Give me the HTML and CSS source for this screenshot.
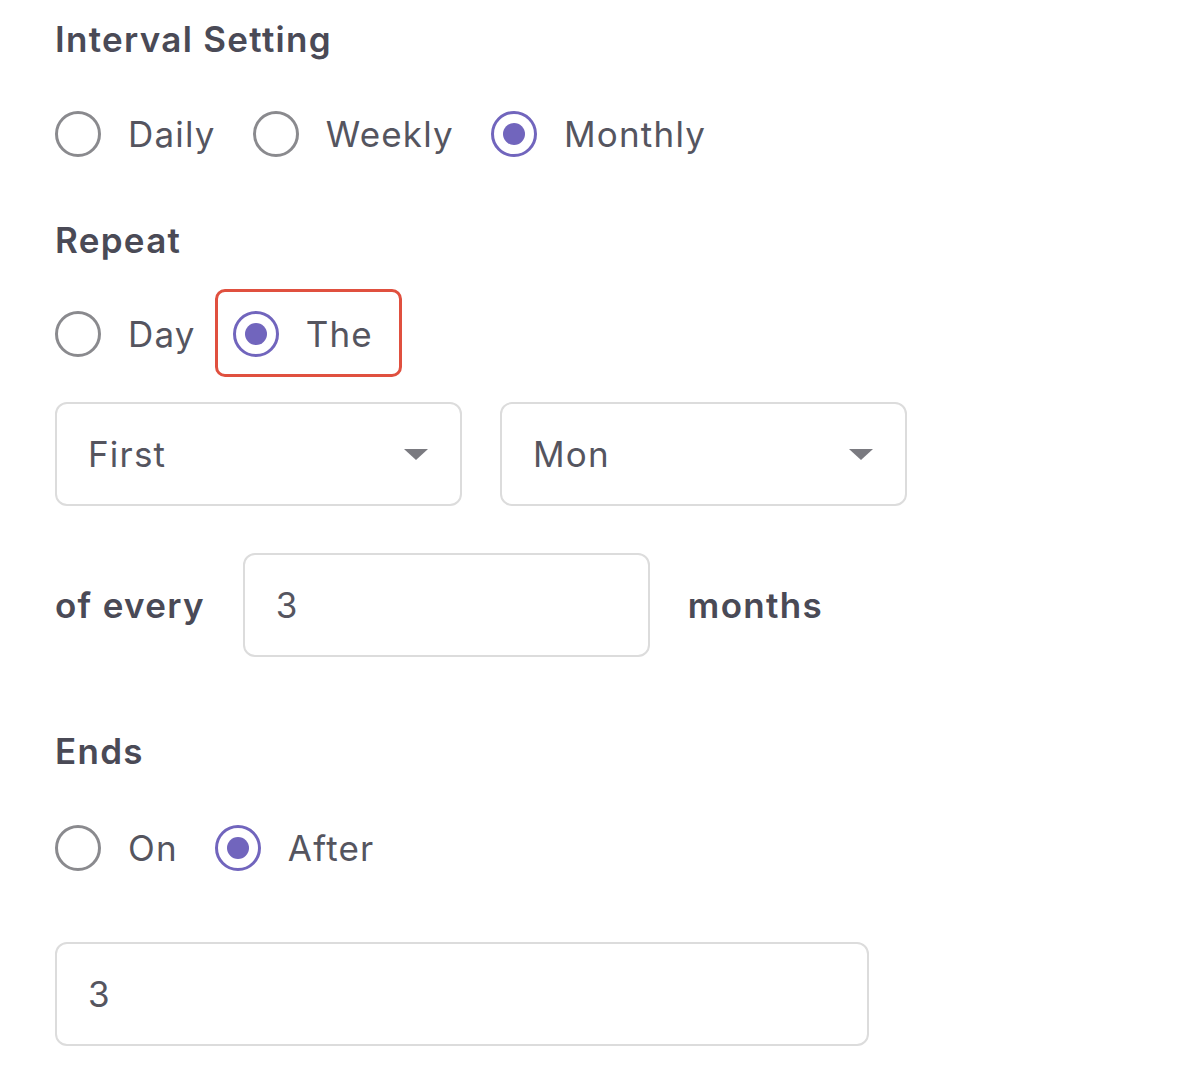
FILE: index.html
```html
<!DOCTYPE html>
<html>
<head>
<meta charset="utf-8">
<link rel="stylesheet" href="styles.css">
</head>
<body>
<div class="form">
  <div class="heading h-interval">Interval Setting</div>
  <div class="radio-row row-interval">
    <label class="opt"><span class="radio"></span><span class="opt-label">Daily</span></label>
    <label class="opt"><span class="radio"></span><span class="opt-label">Weekly</span></label>
    <label class="opt"><span class="radio checked"></span><span class="opt-label">Monthly</span></label>
  </div>

  <div class="heading h-repeat">Repeat</div>
  <div class="radio-row row-repeat">
    <label class="opt"><span class="radio"></span><span class="opt-label">Day</span></label>
    <label class="opt highlighted"><span class="radio checked"></span><span class="opt-label">The</span></label>
  </div>

  <div class="select-row">
    <div class="select"><span class="value">First</span><span class="caret"></span></div>
    <div class="select"><span class="value">Mon</span><span class="caret"></span></div>
  </div>

  <div class="every-row">
    <span class="inline-label">of every</span>
    <div class="input small"><span class="value">3</span></div>
    <span class="inline-label">months</span>
  </div>

  <div class="heading h-ends">Ends</div>
  <div class="radio-row row-ends">
    <label class="opt"><span class="radio"></span><span class="opt-label">On</span></label>
    <label class="opt"><span class="radio checked"></span><span class="opt-label">After</span></label>
  </div>

  <div class="input wide"><span class="value">3</span></div>
</div>
</body>
</html>
```

FILE: styles.css
```css
* { box-sizing: border-box; }
html, body { margin: 0; padding: 0; background: #ffffff; }
body {
  font-family: Inter, "Noto Sans", sans-serif;
  color: #555560;
}
.form {
  padding: 19px 0 0 55px;
  display: flex;
  flex-direction: column;
  align-items: flex-start;
}
.heading {
  font-size: 35px;
  letter-spacing: 1.3px;
  line-height: 40px;
  height: 40px;
  font-weight: 600;
  color: #4a4a56;
}
.radio-row {
  display: flex;
  align-items: center;
  gap: 37px;
  height: 50px;
}
.row-interval { margin-top: 50px; }
.h-repeat { margin-top: 61px; }
.row-repeat { margin-top: 49px; }
.h-ends { margin-top: 74px; }
.row-ends { margin-top: 52px; }

.opt {
  display: flex;
  align-items: center;
  gap: 27px;
  position: relative;
}
.opt-label {
  font-size: 35px;
  letter-spacing: 1.2px;
  line-height: 40px;
  color: #55555f;
}
.radio {
  width: 46px;
  height: 46px;
  border-radius: 50%;
  border: 3.5px solid #8a8a8e;
  display: flex;
  align-items: center;
  justify-content: center;
  flex: none;
}
.radio.checked { border-color: #7165bd; }
.radio.checked::after {
  content: "";
  width: 22px;
  height: 22px;
  border-radius: 50%;
  background: #7165bd;
}
.highlighted::before {
  content: "";
  position: absolute;
  left: -18px;
  top: -22px;
  right: -29px;
  bottom: -20px;
  border: 3px solid #e0503f;
  border-radius: 10px;
}

.select-row {
  margin-top: 43px;
  display: flex;
  gap: 38px;
}
.select, .input {
  height: 104px;
  border: 2px solid #dcdcdc;
  border-radius: 12px;
  display: flex;
  align-items: center;
  padding-left: 31px;
  background: #fff;
}
.select {
  width: 407px;
  justify-content: space-between;
  padding-right: 32px;
}
.value {
  font-size: 35px;
  letter-spacing: 1.2px;
  line-height: 40px;
  color: #55555f;
}
.caret {
  width: 0;
  height: 0;
  border-left: 12px solid transparent;
  border-right: 12px solid transparent;
  border-top: 11px solid #7a7a80;
}

.every-row {
  margin-top: 47px;
  display: flex;
  align-items: center;
  gap: 38px;
}
.inline-label {
  font-size: 35px;
  letter-spacing: 1.3px;
  line-height: 40px;
  font-weight: 600;
  color: #4a4a56;
}
.input.small { width: 407px; }
.input.wide { width: 814px; margin-top: 69px; }
```
